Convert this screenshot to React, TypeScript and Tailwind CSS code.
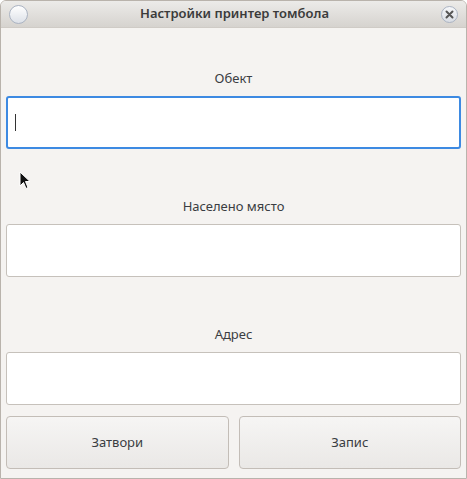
export default function App() {
  return (
    <div
      className="relative w-[467px] h-[479px] flex flex-col bg-[#f5f3f1] border border-[#b9b3ac] rounded-t-[6px] overflow-hidden"
      style={{ fontFamily: '"Noto Sans", "Open Sans", sans-serif' }}
    >
      {/* title bar */}
      <div className="h-[27px] shrink-0 flex items-center justify-between px-[8px] bg-gradient-to-b from-[#ecebe9] to-[#d6d3cf] border-b border-[#cfcbc6]">
        <div className="w-[19px] h-[19px] rounded-full border border-[#aab3c2] bg-gradient-to-b from-[#ffffff] to-[#dde1e8]" />
        <div className="text-[13px] font-semibold text-[#3b3b3b]">Настройки принтер томбола</div>
        <div className="w-[17px] h-[17px] rounded-full border border-[#aab3c2] bg-gradient-to-b from-[#f6f7f9] to-[#d9dde4] flex items-center justify-center">
          <svg width="9" height="9" viewBox="0 0 9 9">
            <path d="M1.5 1.5 L7.5 7.5 M7.5 1.5 L1.5 7.5" stroke="#555" strokeWidth="2" strokeLinecap="round" />
          </svg>
        </div>
      </div>

      {/* body */}
      <div className="flex flex-col px-[5px] pt-[41px] text-[13px] text-[#3a3d42]">
        <div className="h-[18px] leading-[18px] text-center">Обект</div>
        <div className="mt-[9px] h-[53px] bg-white border-2 border-[#3d8ae2] rounded-[3px] flex items-center pl-[7px]">
          <div className="w-[1px] h-[17px] bg-[#333]" />
        </div>

        <div className="mt-[48px] h-[18px] leading-[18px] text-center">Населено място</div>
        <div className="mt-[9px] h-[53px] bg-white border border-[#c6c1bb] rounded-[3px]" />

        <div className="mt-[48px] h-[18px] leading-[18px] text-center">Адрес</div>
        <div className="mt-[9px] h-[53px] bg-white border border-[#c6c1bb] rounded-[3px]" />

        <div className="mt-[11px] grid grid-cols-2 gap-[10px]">
          <button className="h-[53px] rounded-[4px] border border-[#c3bdb7] bg-gradient-to-b from-[#f6f5f4] to-[#eae8e6] text-[#3a3d42]">
            Затвори
          </button>
          <button className="h-[53px] rounded-[4px] border border-[#c3bdb7] bg-gradient-to-b from-[#f6f5f4] to-[#eae8e6] text-[#3a3d42]">
            Запис
          </button>
        </div>
      </div>

      {/* mouse pointer */}
      <svg className="absolute left-[18px] top-[170px]" width="12" height="19" viewBox="0 0 12 19">
        <path d="M1 1 L1 15 L4.5 11.5 L7 17.5 L9 16.5 L6.5 10.5 L11 10.5 Z" fill="#111" stroke="#fff" strokeWidth="1" />
      </svg>
    </div>
  );
}
